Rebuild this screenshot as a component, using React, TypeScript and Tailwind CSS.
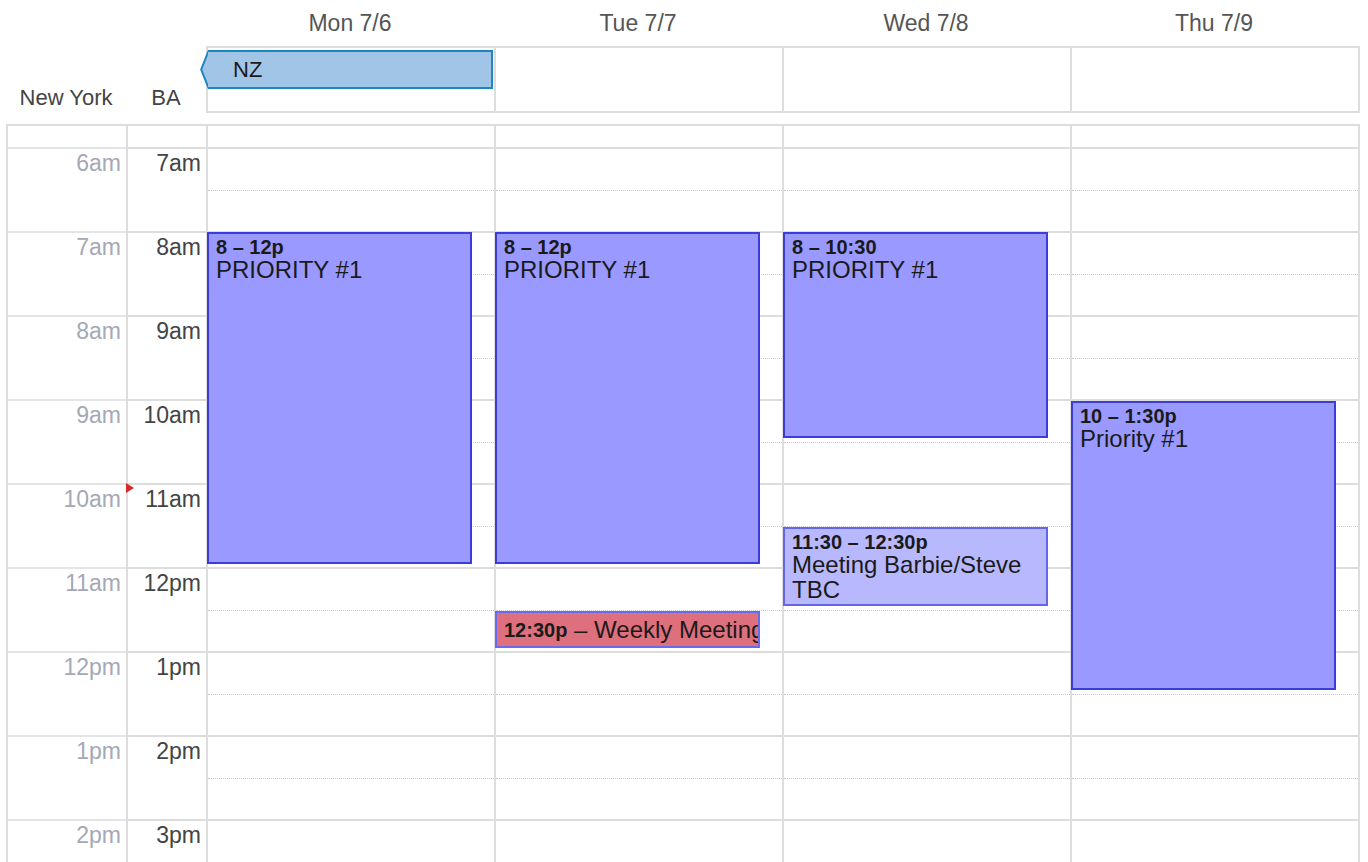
import React from 'react';

const days = ['Mon 7/6', 'Tue 7/7', 'Wed 7/8', 'Thu 7/9'];
const nyHours = ['6am', '7am', '8am', '9am', '10am', '11am', '12pm', '1pm', '2pm'];
const baHours = ['7am', '8am', '9am', '10am', '11am', '12pm', '1pm', '2pm', '3pm'];

type CalEvent = {
  time: string;
  title: string;
  pos: string;
  color: string;
  inline?: boolean;
};

const strong = 'bg-[#9999ff] border-[#3c3cd8]';
const light = 'bg-[#b8b8ff] border-[#6565e8]';
const red = 'bg-[#de707e] border-[#6a6aee]';

const events: CalEvent[][] = [
  [{ time: '8 – 12p', title: 'PRIORITY #1', pos: 'top-[106px] h-[332px]', color: strong }],
  [
    { time: '8 – 12p', title: 'PRIORITY #1', pos: 'top-[106px] h-[332px]', color: strong },
    { time: '12:30p', title: 'Weekly Meeting', pos: 'top-[485px] h-[37px]', color: red, inline: true },
  ],
  [
    { time: '8 – 10:30', title: 'PRIORITY #1', pos: 'top-[106px] h-[206px]', color: strong },
    { time: '11:30 – 12:30p', title: 'Meeting Barbie/Steve TBC', pos: 'top-[401px] h-[79px]', color: light },
  ],
  [{ time: '10 – 1:30p', title: 'Priority #1', pos: 'top-[275px] h-[289px]', color: strong }],
];

function EventBox({ ev }: { ev: CalEvent }) {
  if (ev.inline) {
    return (
      <div
        className={`absolute left-[-1px] w-[265px] border-2 ${ev.pos} ${ev.color} flex items-center overflow-hidden whitespace-nowrap pl-[7px] pr-[3px] text-[#1a1a1a]`}
      >
        <span className="text-[20px] font-bold">{ev.time}</span>
        <span className="text-[24px]">&nbsp;– {ev.title}</span>
      </div>
    );
  }
  return (
    <div
      className={`absolute left-[-1px] w-[265px] border-2 ${ev.pos} ${ev.color} overflow-hidden px-[7px] pt-[3px] text-[#1a1a1a]`}
    >
      <div className="text-[20px] leading-[20px] font-bold">{ev.time}</div>
      <div className="text-[24px] leading-[25px]">{ev.title}</div>
    </div>
  );
}

export default function App() {
  return (
    <div className="h-[862px] w-[1368px] overflow-hidden bg-white font-['Liberation_Sans',Arial,sans-serif] text-[#444]">
      {/* day headings */}
      <div className="flex h-[46px]">
        <div className="w-[206px] shrink-0" />
        {days.map((d) => (
          <div key={d} className="flex w-[288px] shrink-0 items-center justify-center text-[23px] text-[#555]">
            {d}
          </div>
        ))}
      </div>

      {/* all-day row */}
      <div className="flex h-[67px]">
        <div className="flex w-[206px] shrink-0 items-end pb-[1px] pl-[6px] text-[22px] leading-[28px]">
          <div className="w-[120px] text-center">New York</div>
          <div className="w-[80px] text-center">BA</div>
        </div>
        <div className="flex border-y-2 border-r-2 border-[#ddd]">
          {days.map((d, i) => (
            <div key={d} className="w-[288px] shrink-0 border-l-2 border-[#ddd] pt-[2px]">
              {i === 0 && (
                <div className="ml-[-8px] mr-[1px] flex h-[39px]">
                  <svg width="8" height="39" viewBox="0 0 8 39" className="shrink-0">
                    <polygon points="8,0 1,19.5 8,39" fill="#a0c5e6" />
                    <polyline points="8.5,1 1.2,19.5 8.5,38" fill="none" stroke="#1a87c0" strokeWidth="2" />
                  </svg>
                  <div className="flex flex-1 items-center border-y-2 border-r-2 border-[#1a87c0] bg-[#a0c5e6] pl-[25px] text-[22px] text-[#1a1a1a]">
                    NZ
                  </div>
                </div>
              )}
            </div>
          ))}
        </div>
      </div>

      {/* time grid */}
      <div className="relative ml-[6px] mt-[11px] flex w-fit border-t-2 border-r-2 border-[#ddd]">
        <div className="w-[120px] shrink-0 border-l-2 border-[#ddd] text-[23px] leading-[28px] text-[#a4a8b6]">
          <div className="h-[23px] border-b-2 border-[#e2e4e8]" />
          {nyHours.map((h) => (
            <div key={h} className="h-[84px] border-b-2 border-[#e2e4e8] pr-[5px] text-right">
              {h}
            </div>
          ))}
        </div>
        <div className="w-[80px] shrink-0 border-l-2 border-[#ddd] text-[23px] leading-[28px] text-[#444]">
          <div className="h-[23px] border-b-2 border-[#ddd]" />
          {baHours.map((h) => (
            <div key={h} className="h-[84px] border-b-2 border-[#ddd] pr-[5px] text-right">
              {h}
            </div>
          ))}
        </div>
        {days.map((d, i) => (
          <div key={d} className="relative w-[288px] shrink-0 border-l-2 border-[#ddd]">
            <div className="h-[23px] border-b-2 border-[#ddd]" />
            {nyHours.map((h) => (
              <div key={h} className="h-[84px] border-b-2 border-[#ddd]">
                <div className="h-[42px] border-b border-dotted border-[#c8c8c8]" />
              </div>
            ))}
            {events[i].map((ev) => (
              <EventBox key={ev.time} ev={ev} />
            ))}
          </div>
        ))}

        {/* now indicator */}
        <svg width="8" height="10" viewBox="0 0 8 10" className="absolute left-[120px] top-[357px]">
          <polygon points="0,0 8,5 0,10" fill="#d42a2a" />
        </svg>
      </div>
    </div>
  );
}
